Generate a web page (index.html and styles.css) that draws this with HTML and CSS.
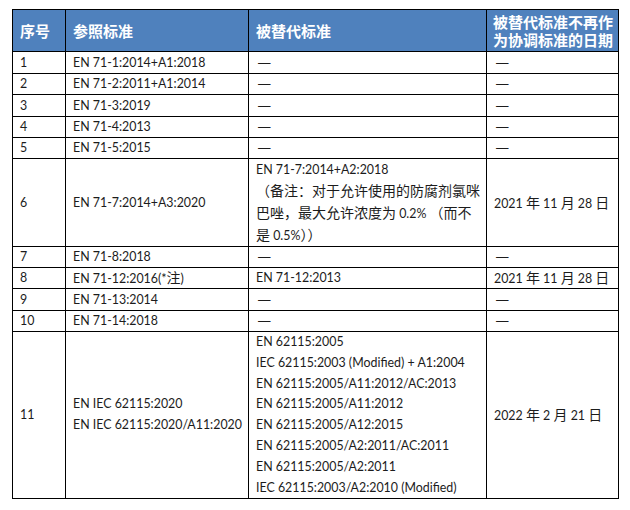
FILE: index.html
```html
<!DOCTYPE html>
<html lang="zh-CN">
<head>
<meta charset="utf-8">
<title>协调标准</title>
<link rel="stylesheet" href="styles.css">
</head>
<body>
<div class="page">
<table class="std">
<colgroup><col class="c1"><col class="c2"><col class="c3"><col class="c4"></colgroup>
<thead>
<tr class="hd">
<th>序号</th>
<th>参照标准</th>
<th>被替代标准</th>
<th class="last"><span class="hl">被替代标准不再作</span><span class="hl">为协调标准的日期</span></th>
</tr>
</thead>
<tbody>
<tr class="h22"><td>1</td><td>EN 71-1:2014+A1:2018</td><td class="dash">—</td><td class="dash">—</td></tr>
<tr class="h21"><td>2</td><td>EN 71-2:2011+A1:2014</td><td class="dash">—</td><td class="dash">—</td></tr>
<tr class="h22"><td>3</td><td>EN 71-3:2019</td><td class="dash">—</td><td class="dash">—</td></tr>
<tr class="h21"><td>4</td><td>EN 71-4:2013</td><td class="dash">—</td><td class="dash">—</td></tr>
<tr class="h21"><td>5</td><td>EN 71-5:2015</td><td class="dash">—</td><td class="dash">—</td></tr>
<tr class="h85"><td>6</td><td>EN 71-7:2014+A3:2020</td>
<td class="note">EN 71-7:2014+A2:2018<br><span class="zh">（备注：对于允许使用的防腐剂氯咪<br>巴唑，最大允许浓度为</span> 0.2% <span class="zh">（而不<br>是</span> 0.5%<span class="zh">））</span></td>
<td>2021 <span class="zh">年</span> 11 <span class="zh">月</span> 28 <span class="zh">日</span></td></tr>
<tr class="h21"><td>7</td><td>EN 71-8:2018</td><td class="dash">—</td><td class="dash">—</td></tr>
<tr class="h21"><td>8</td><td>EN 71-12:2016(*<span class="zh">注</span>)</td><td>EN 71-12:2013</td><td>2021 <span class="zh">年</span> 11 <span class="zh">月</span> 28 <span class="zh">日</span></td></tr>
<tr class="h22"><td>9</td><td>EN 71-13:2014</td><td class="dash">—</td><td class="dash">—</td></tr>
<tr class="h21"><td>10</td><td>EN 71-14:2018</td><td class="dash">—</td><td class="dash">—</td></tr>
<tr class="h167"><td>11</td><td class="list">EN IEC 62115:2020<br>EN IEC 62115:2020/A11:2020</td>
<td class="list">EN 62115:2005<br>IEC 62115:2003 (Modified) + A1:2004<br>EN 62115:2005/A11:2012/AC:2013<br>EN 62115:2005/A11:2012<br>EN 62115:2005/A12:2015<br>EN 62115:2005/A2:2011/AC:2011<br>EN 62115:2005/A2:2011<br>IEC 62115:2003/A2:2010 (Modified)</td>
<td>2022 <span class="zh">年</span> 2 <span class="zh">月</span> 21 <span class="zh">日</span></td></tr>
</tbody>
</table>
</div>
</body>
</html>
```

FILE: styles.css
```css
html, body {
  margin: 0;
  padding: 0;
  background: #ffffff;
}

.page {
  padding: 9px 0 0 12px;
}

.std {
  border-collapse: collapse;
  table-layout: fixed;
  width: 606px;
  border: 1px solid #000;
  font-family: Lato, "Noto Sans CJK SC", sans-serif;
  font-size: 12.4px;
  color: #1c1c1c;
}

.c1 { width: 53px; }
.c2 { width: 183px; }
.c3 { width: 238px; }
.c4 { width: 132px; }

.std th,
.std td {
  border: 1px solid #000;
  padding: 0 4px 0 7px;
  text-align: left;
  vertical-align: middle;
  line-height: 18px;
  white-space: nowrap;
}

.std th {
  background: #4f81bd;
  color: #ffffff;
  font-family: "Noto Sans CJK SC", sans-serif;
  font-weight: bold;
  font-size: 15px;
  height: 42px;
  box-sizing: border-box;
}

.std th.last {
  padding-left: 6px;
  padding-right: 2px;
}

.hl {
  display: block;
  height: 18px;
  line-height: 18px;
}

.zh {
  font-family: "Noto Sans CJK SC", sans-serif;
  font-size: 14px;
}

.std td.dash {
  font-family: "Liberation Sans", sans-serif;
  font-size: 12.5px;
  padding-left: 9px;
}

.note {
  line-height: 21px !important;
}

.list {
  line-height: 20.8px !important;
}

.h21 td { height: 21px; box-sizing: border-box; }
.h22 td { height: 22px; box-sizing: border-box; }
.h85 td { height: 85px; box-sizing: border-box; }
.h167 td { height: 167px; box-sizing: border-box; }
```
